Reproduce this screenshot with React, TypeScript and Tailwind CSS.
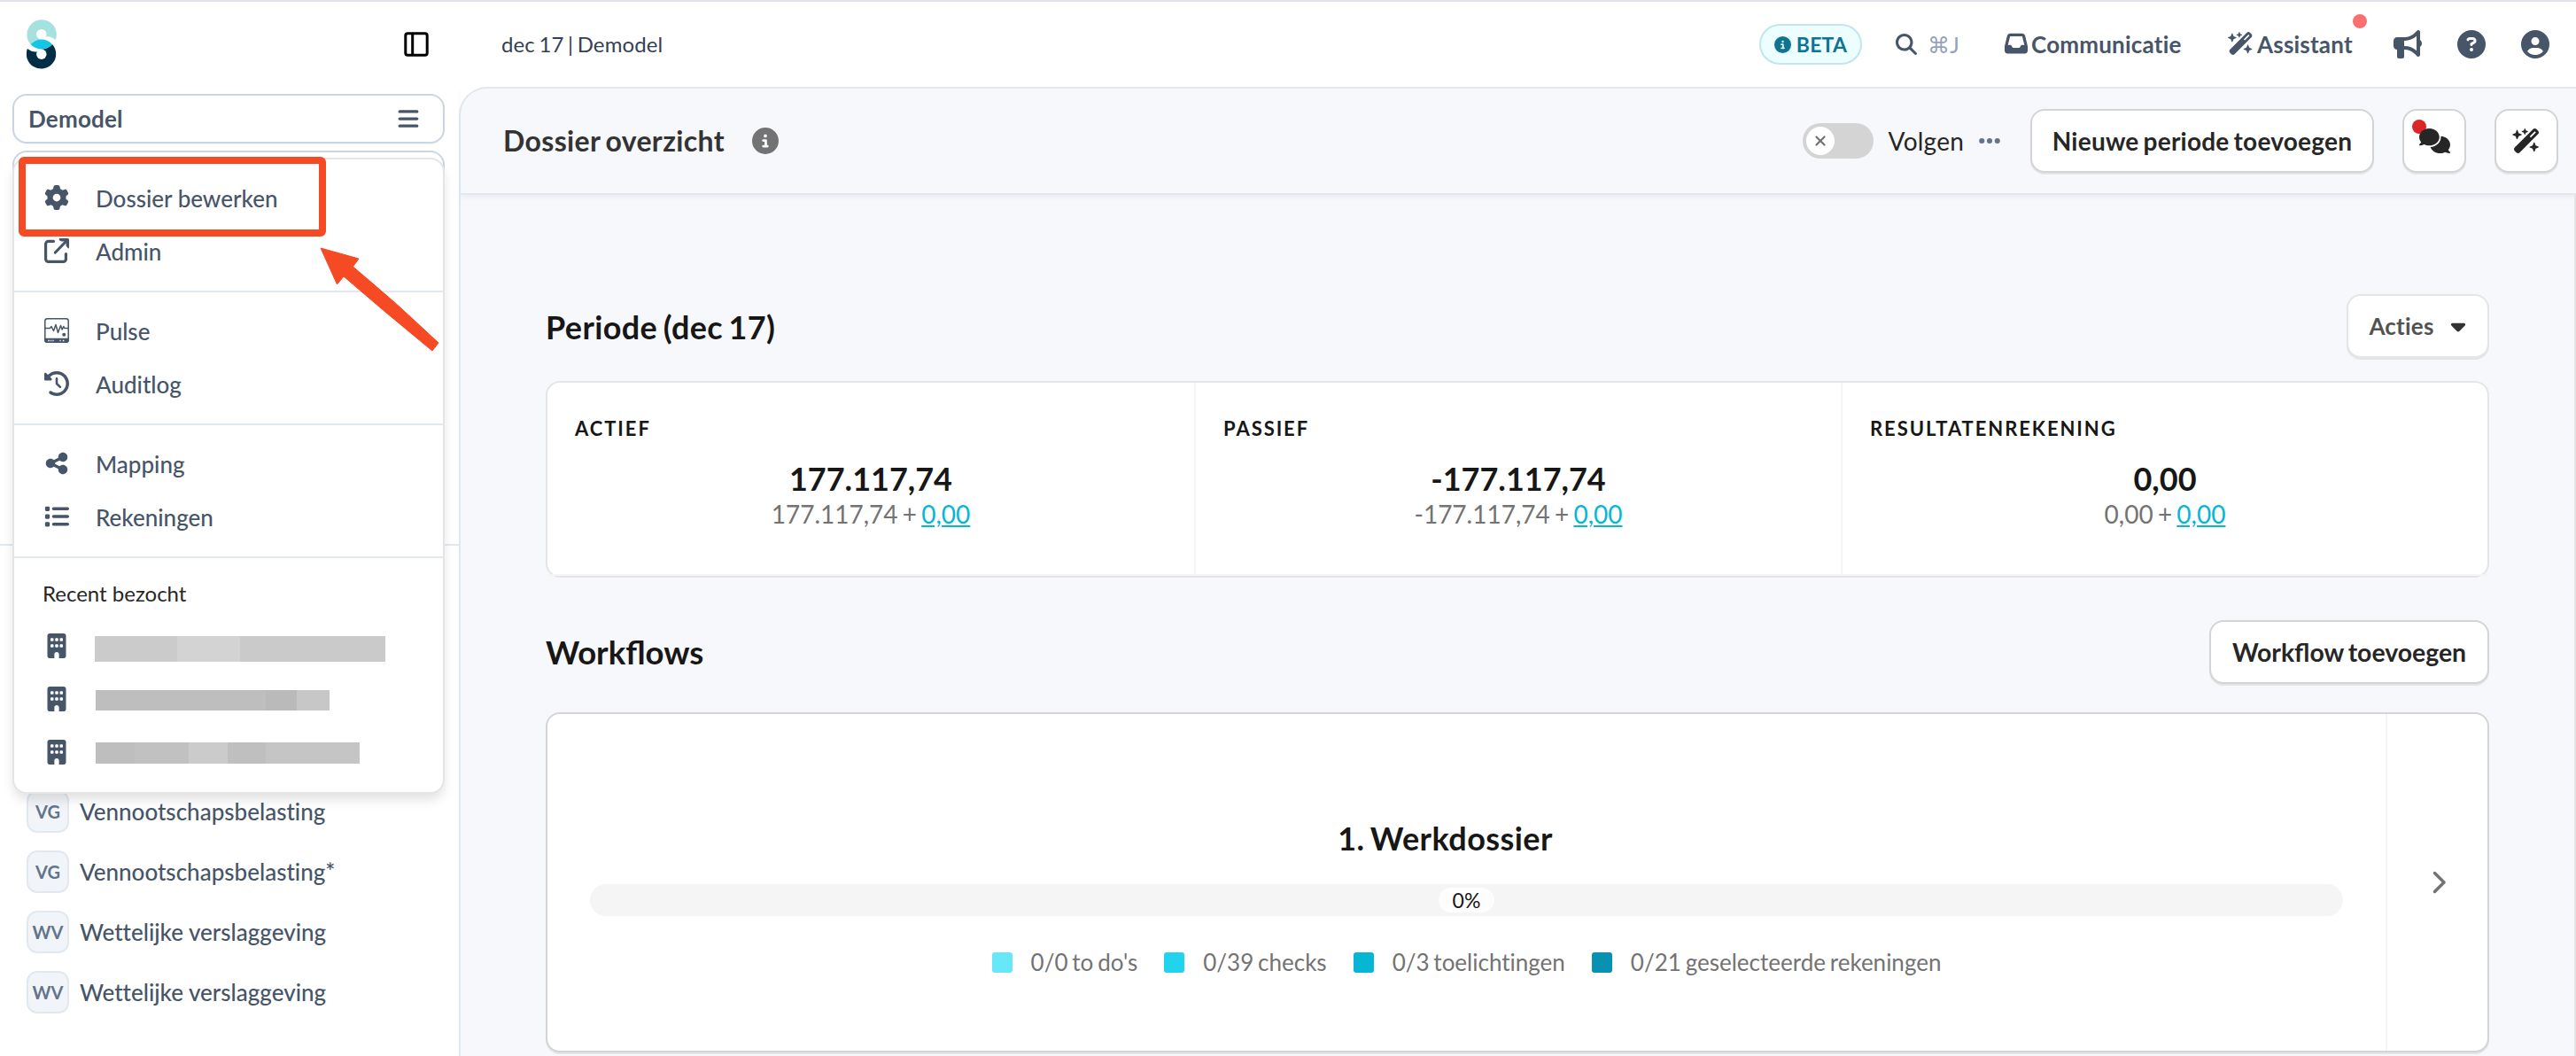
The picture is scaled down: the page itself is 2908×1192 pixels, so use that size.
import type { ReactNode } from 'react'
import clsx from 'clsx'
import {
  FaBars,
  FaBuilding,
  FaBullhorn,
  FaCaretDown,
  FaChevronRight,
  FaCircleInfo,
  FaCircleQuestion,
  FaCircleUser,
  FaClockRotateLeft,
  FaComments,
  FaEllipsis,
  FaGear,
  FaInbox,
  FaList,
  FaMagnifyingGlass,
  FaShareNodes,
  FaWandMagicSparkles,
  FaXmark
} from 'react-icons/fa6'

interface Balance {
  label: string
  total: string
  base: string
}

const balances: Balance[] = [
  { label: 'ACTIEF', total: '177.117,74', base: '177.117,74' },
  { label: 'PASSIEF', total: '-177.117,74', base: '-177.117,74' },
  { label: 'RESULTATENREKENING', total: '0,00', base: '0,00' }
]

const workflows = [
  { code: 'VG', name: 'Vennootschapsbelasting' },
  { code: 'VG', name: 'Vennootschapsbelasting*' },
  { code: 'WV', name: 'Wettelijke verslaggeving' },
  { code: 'WV', name: 'Wettelijke verslaggeving' }
]

const legend = [
  { color: 'bg-[#67e8f9]', label: "0/0 to do's" },
  { color: 'bg-[#22d3ee]', label: '0/39 checks' },
  { color: 'bg-[#06b6d4]', label: '0/3 toelichtingen' },
  { color: 'bg-[#0891b2]', label: '0/21 geselecteerde rekeningen' }
]

function Logo() {
  return (
    <svg viewBox="30 22 34 56" className="h-14 w-[34px]">
      <path d="M62.7 45A16.7 16.7 0 1 0 34.5 50A16.7 16.7 0 0 1 46.8 44.5L51.5 41.5Q57 40.5 62.7 45Z" fill="#a5e1de" />
      <path d="M30.9 54.9A16.7 16.7 0 1 0 59.1 49.9A16.7 16.7 0 0 1 46.8 55.4L42.1 58.4Q36.6 59.4 30.9 54.9Z" fill="#022f45" />
      <path d="M34.5 50A16.7 16.7 0 0 1 59.1 50A16.7 16.7 0 0 1 34.5 50Z" fill="#15c5e4" />
      <circle cx="46.8" cy="38.6" r="5.7" fill="#fff" />
      <circle cx="46.8" cy="61.3" r="5.7" fill="#fff" />
    </svg>
  )
}

function PanelIcon() {
  return (
    <svg viewBox="0 0 28 28" className="size-7" fill="none" stroke="#000" strokeWidth="3">
      <rect x="1.8" y="1.8" width="24.4" height="24.4" rx="2.4" />
      <path d="M9.7 2v24" />
    </svg>
  )
}

function ExternalIcon() {
  return (
    <svg viewBox="0 0 28 28" className="size-7" fill="none" stroke="currentColor" strokeWidth="3.2" strokeLinecap="round" strokeLinejoin="round">
      <path d="M10.5 3.4H4.6a3 3 0 0 0-3 3V23.4a3 3 0 0 0 3 3H21.4a3 3 0 0 0 3-3V17.5" />
      <path d="M12.4 16L25 3" />
      <path d="M17.4 0H26.4Q28 0 28 1.6V10.6Q28 12 26.6 11L24.6 8.6V3.4H19.4L17 2.2Q15.8 .4 17.4 0Z" fill="currentColor" stroke="none" />
    </svg>
  )
}

function PulseIcon() {
  return (
    <svg viewBox="0 0 28 28" className="size-7" fill="none" stroke="currentColor" strokeWidth="1.5">
      <rect x=".8" y=".8" width="26.4" height="26.4" rx="2.6" />
      <path d="M1 23.6H27V25.5Q27 27.2 25 27.2H3Q1 27.2 1 25.5Z" fill="currentColor" />
      <path d="M1 11.5H6.5L8 9.5L10.5 14.5L13 7.5L15.5 16.5L18.5 8.5L20.2 13L21.8 9.5L22.8 11.5H27" strokeLinejoin="round" />
      <circle cx="22.2" cy="18.8" r="2" fill="currentColor" stroke="none" />
      <path d="M4.3 25.5h1.6M7 25.5h1.2M9.4 25.5h1.2M17.4 25.5h1.2M20.8 25.5h1.6" stroke="#fff" strokeWidth="1.6" />
    </svg>
  )
}

function MenuItem({ icon, children }: { icon: ReactNode; children: ReactNode }) {
  return (
    <div className="flex h-[60px] items-center gap-[30px] pl-[34px]">
      <span className="flex size-7 -translate-y-px items-center justify-center">{icon}</span>
      {children}
    </div>
  )
}

function Button({ className, children }: { className?: string; children: ReactNode }) {
  return (
    <button
      className={clsx(
        'flex h-18 items-center justify-center rounded-2xl border-2 bg-white font-bold whitespace-nowrap shadow-[0_2px_0_#e5e5e6]',
        className
      )}
    >
      {children}
    </button>
  )
}

function DossierMenu() {
  return (
    <div className="absolute top-[178px] left-3.5 z-10 w-[488px] rounded-2xl border-2 border-[#e5e5e5] bg-white text-[26px] font-medium text-[#475569] shadow-[0_8px_14px_-2px_rgba(0,0,0,0.13)]">
      <div className="border-b-2 border-[#e2e8f0] py-3.5">
        <MenuItem icon={<FaGear className="size-7" />}>Dossier bewerken</MenuItem>
        <MenuItem icon={<ExternalIcon />}>Admin</MenuItem>
      </div>
      <div className="border-b-2 border-[#e2e8f0] py-3.5">
        <MenuItem icon={<PulseIcon />}>Pulse</MenuItem>
        <MenuItem icon={<FaClockRotateLeft className="size-7" />}>Auditlog</MenuItem>
      </div>
      <div className="border-b-2 border-[#e2e8f0] py-3.5">
        <MenuItem icon={<FaShareNodes className="size-7" />}>Mapping</MenuItem>
        <MenuItem icon={<FaList className="size-7" />}>Rekeningen</MenuItem>
      </div>
      <div className="py-3.5">
        <div className="flex h-14 items-center pb-1 pl-8 text-2xl font-normal text-[#262626]">Recent bezocht</div>

        {/* Redacted names */}
        <MenuItem icon={<FaBuilding className="size-7" />}>
          <span className="-ml-px flex h-[29px] translate-y-0.5">
            <span className="w-[93px] bg-[#cbcbcb]" />
            <span className="w-[71px] bg-[#d3d3d3]" />
            <span className="w-[164px] bg-[#cacaca]" />
          </span>
        </MenuItem>
        <MenuItem icon={<FaBuilding className="size-7" />}>
          <span className="flex h-[23px]">
            <span className="w-48 bg-[#bebebe]" />
            <span className="w-[35px] bg-[#bababa]" />
            <span className="w-[37px] bg-[#c7c7c7]" />
          </span>
        </MenuItem>
        <MenuItem icon={<FaBuilding className="size-7" />}>
          <span className="flex h-6">
            <span className="w-11 bg-[#bebebe]" />
            <span className="w-[61px] bg-[#c1c1c1]" />
            <span className="w-11 bg-[#cbcbcb]" />
            <span className="w-[43px] bg-[#bfbfbf]" />
            <span className="w-[106px] bg-[#c5c5c5]" />
          </span>
        </MenuItem>
      </div>
    </div>
  )
}

function Sidebar() {
  return (
    <aside className="relative flex w-[518px] shrink-0 flex-col">
      <div className="flex h-[98px] items-center justify-between pt-0.5 pr-[34px] pl-[30px]">
        <Logo />
        <PanelIcon />
      </div>
      <div className="mx-3.5 mt-2 flex h-14 w-[488px] items-center justify-between rounded-2xl border-2 border-[#cbd5e1] pr-[26px] pl-4 text-[26px] font-bold tracking-[0.008em] text-[#475569] shadow-xs">
        Demodel
        <FaBars className="size-[26px]" />
      </div>
      <div className="mx-3.5 mt-2 h-14 w-[488px] rounded-2xl border-2 border-[#cbd5e1]" />
      <div className="mt-[388px] border-t-2 border-[#e2e8f0]" />
      <nav className="mt-[276px] flex flex-col gap-5 pl-[30px]">
        {workflows.map((workflow, i) => (
          <div key={i} className="flex items-center gap-3 text-[26px] font-medium text-[#475569]">
            <span className="flex size-12 items-center justify-center rounded-xl border-2 border-[#e2e8f0] bg-[#f1f5f9] text-xl font-bold text-[#64748b]">
              {workflow.code}
            </span>
            {workflow.name}
          </div>
        ))}
      </nav>

      <DossierMenu />

      {/* Annotation: highlighted item and arrow */}
      <div className="absolute top-[177px] left-[21px] z-20 h-[90px] w-[347px] rounded-md border-8 border-[#f54a24]" />
      <svg viewBox="0 0 140 124" className="absolute top-[276px] left-[360px] z-20 h-[124px] w-[140px]">
        <path d="M2 4L45 16L38.5 25Q88 66 135 111L128 120Q77 78.5 28 36L20.5 45Z" fill="#f54a24" stroke="#f54a24" strokeLinejoin="round" />
      </svg>
    </aside>
  )
}

function TopBar() {
  return (
    <header className="flex h-[98px] items-center pt-0.5 pr-[30px] pl-12 text-[26px] font-bold tracking-[0.008em] text-[#475569]">
      <span className="text-2xl font-normal tracking-[0.004em] text-[#334155]">dec 17 | Demodel</span>
      <span className="ml-auto flex h-[46px] w-[116px] items-center justify-center gap-1.5 rounded-full border-2 border-[#c3e5ec] bg-[#ecfeff] text-[23px] text-[#0e7490]">
        <FaCircleInfo className="size-[19px]" />
        BETA
      </span>
      <span className="ml-[38px] flex w-[85px] items-center gap-3 font-normal text-[#94a3b8]">
        <FaMagnifyingGlass className="size-6 shrink-0 text-[#475569]" />
        <span className="text-[25px] whitespace-nowrap">⌘J</span>
      </span>
      <span className="ml-[38px] flex w-[201px] items-center gap-1">
        <FaInbox className="size-[26px] shrink-0 -translate-y-px" />
        Communicatie
      </span>
      <span className="relative ml-[51px] flex w-[142px] items-center gap-1">
        <FaWandMagicSparkles className="h-[26px] w-[29px] shrink-0 -translate-y-px" />
        Assistant
        <span className="absolute -top-[21px] -right-[15px] size-4 rounded-full bg-[#f87171]" />
      </span>
      <FaBullhorn className="ml-[45px] size-8" />
      <FaCircleQuestion className="ml-10 size-8" />
      <FaCircleUser className="ml-10 size-8" />
    </header>
  )
}

function PageHeader() {
  return (
    <div className="flex h-[120px] items-center border-b-2 border-[#e2e8f0] pr-5 pl-12 shadow-[0_3px_5px_rgba(100,116,139,0.08)]">
      <h1 className="text-[32px] font-bold tracking-[0.011em] text-[#333]">Dossier overzicht</h1>
      <FaCircleInfo className="ml-[31px] size-[30px] text-[#737373]" />
      <span className="ml-auto flex h-10 w-20 items-center rounded-full bg-[#d4d4d4] p-1">
        <span className="flex size-8 items-center justify-center rounded-full bg-white text-[#737373]">
          <FaXmark className="size-[18px]" />
        </span>
      </span>
      <span className="ml-[17px] text-[28px] tracking-[0.008em] text-[#262626]">Volgen</span>
      <FaEllipsis className="mr-8 ml-[15px] size-7 text-[#64748b]" />
      <Button className="w-[388px] border-[#d4d4d4] text-[28px] tracking-[0.008em] text-[#262626]">Nieuwe periode toevoegen</Button>
      <Button className="relative ml-8 w-18 border-[#d4d4d4] text-[#262626]">
        <span className="absolute top-2.5 left-[9px] size-4 rounded-full bg-[#dc2626]" />
        <FaComments className="relative h-7 w-[35px]" />
      </Button>
      <Button className="ml-8 w-18 border-[#d4d4d4] text-[#262626]">
        <FaWandMagicSparkles className="h-7 w-8" />
      </Button>
    </div>
  )
}

export default function App() {
  return (
    <div className="flex h-[1192px] w-[2908px] overflow-hidden border-t-2 border-[#e2e1ef] bg-white font-[Lato,sans-serif] leading-none [font-variant-ligatures:no-common-ligatures] *:-mt-0.5">
      <Sidebar />
      <div className="flex min-w-0 flex-1 flex-col [&_*]:[word-spacing:-0.07em]">
        <TopBar />
        <div className="flex flex-1 flex-col rounded-tl-[32px] border-t-2 border-l-2 border-[#e2e8f0] bg-[#f7f8fc]">
          <PageHeader />
          <main className="flex-1 border-r-2 border-[#e5e5e5] px-24 pt-28">
            <div className="flex items-center justify-between">
              <h2 className="pt-0.5 text-4xl font-bold tracking-[0.01em] text-[#171717]">Periode (dec 17)</h2>
              <Button className="w-[161px] gap-3.5 border-[#e5e5e5] pl-[3px] text-[26px] tracking-[0.008em] text-[#525252]">
                Acties
                <FaCaretDown className="size-[26px] text-[#333]" />
              </Button>
            </div>

            {/* Balance totals */}
            <div className="mt-[26px] grid h-[222px] grid-cols-3 rounded-2xl border-2 border-[#e5e5e5] bg-white">
              {balances.map((balance) => (
                <div key={balance.label} className="border-b-2 border-l-2 border-[#f5f5f5] pt-9 text-center first:border-l-0">
                  <h3 className="pl-[31px] text-left text-[22px] leading-8 font-bold tracking-[0.088em] text-[#171717]">{balance.label}</h3>
                  <p className="mt-[18px] text-4xl leading-[44px] font-bold text-[#171717]">{balance.total}</p>
                  <p className="text-[28px] leading-9 text-[#737373]">
                    {balance.base} + <a className="text-[#06b6d4] underline">0,00</a>
                  </p>
                </div>
              ))}
            </div>

            <div className="mt-12 flex items-center justify-between">
              <h2 className="text-[36.5px] font-bold text-[#171717] [font-variant-ligatures:normal]">Workflows</h2>
              <Button className="w-[316px] border-[#d4d4d4] text-[28.4px] text-[#262626] [font-variant-ligatures:normal]">Workflow toevoegen</Button>
            </div>

            {/* Workflow card */}
            <div className="mt-8 flex h-96 rounded-2xl border-2 border-[#d4d4d4] bg-white shadow-[0_2px_0_#e5e5e6]">
              <div className="flex-1 px-12 pt-[118px]">
                <h3 className="pr-12 text-center text-4xl leading-[44px] font-bold tracking-[0.012em] text-[#171717]">1. Werkdossier</h3>
                <div className="mt-[30px] flex h-9 items-center justify-center rounded-full bg-[#f5f5f5]">
                  <span className="rounded-full bg-[#fdfdfd] px-4 text-[23px] leading-7 text-[#171717]">0%</span>
                </div>
                <div className="mt-[34px] flex justify-center gap-[30px] text-[26px] leading-9 text-[#737373]">
                  {legend.map((entry) => (
                    <span key={entry.label} className="flex items-center gap-[21px]">
                      <span className={clsx('size-[23px] rounded-[3px]', entry.color)} />
                      {entry.label}
                    </span>
                  ))}
                </div>
              </div>
              <div className="flex w-[115px] items-center justify-center border-l-2 border-[#f5f5f5]">
                <FaChevronRight className="size-7 text-[#737373]" />
              </div>
            </div>
          </main>
        </div>
      </div>
    </div>
  )
}
